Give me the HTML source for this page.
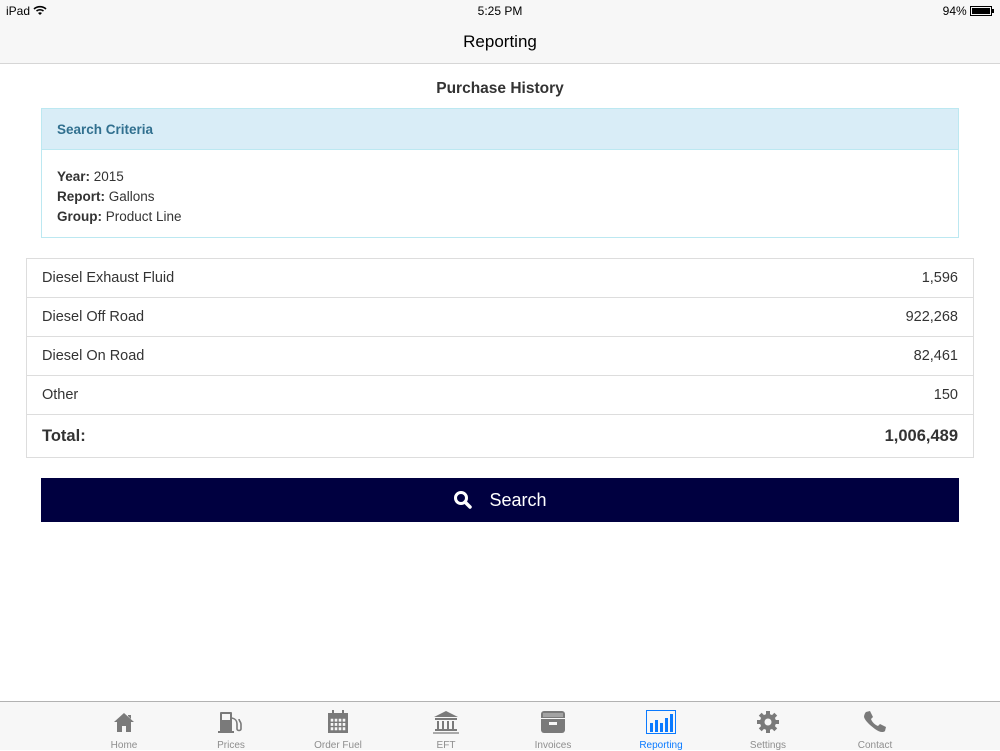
<!DOCTYPE html>
<html><head><style>
*{margin:0;padding:0;box-sizing:border-box}
body{width:1000px;height:750px;position:relative;background:#fff;font-family:"Liberation Sans",Helvetica,Arial,sans-serif;color:#333;overflow:hidden}
.abs{position:absolute}
#top{left:0;top:0;width:1000px;height:64px;background:#f7f7f7;border-bottom:1px solid #d6d6d6}
.sb{font-size:12px;color:#000;top:4px}
#title{top:32px;width:1000px;text-align:center;font-size:17px;color:#000}
#ph{top:80px;width:1000px;text-align:center;font-size:15.5px;font-weight:bold;color:#333}
#panel{left:41px;top:108px;width:918px;height:130px;border:1px solid #bce8f1}
#ph2{height:41px;background:#d9edf7;border-bottom:1px solid #bce8f1;color:#31708f;font-weight:bold;font-size:13.5px;padding:13px 0 0 15px}
#pb{padding:17px 15px;font-size:13.5px;line-height:20px}
#tbl{left:26px;top:258px;width:948px;border:1px solid #ddd}
.row{height:39px;border-bottom:1px solid #ddd;display:flex;justify-content:space-between;align-items:center;padding:0 15px;font-size:14.5px}
.row.t{height:42px;border-bottom:none;font-weight:bold;font-size:16.5px}
#btn{left:41px;top:478px;width:918px;height:44px;background:#000040;color:#fff;font-size:18px;display:flex;justify-content:center;align-items:center}
#tab{left:0;top:701px;width:1000px;height:49px;background:#f7f7f7;border-top:1px solid #b2b2b2}
.ti{position:absolute;top:0;width:100px;margin-left:-50px;text-align:center}
.ti svg{display:block;margin:8px auto 0}
.ti span{display:block;font-size:10px;color:#8e8e8e;margin-top:6px}
</style></head><body>
<div id="top" class="abs"></div>
<div class="abs sb" style="left:6px">iPad <svg width="14" height="10" viewBox="0 0 14 10"><path d="M1 4a9 9 0 0 1 12 0M3.5 6a5.5 5.5 0 0 1 7 0" stroke="#000" stroke-width="1.6" fill="none"/><path d="M7 10l-2-2a3 3 0 0 1 4 0z" fill="#000"/></svg></div>
<div class="abs sb" style="left:0;width:1000px;text-align:center">5:25 PM</div>
<div class="abs sb" style="right:6px;display:flex;align-items:center">94%&nbsp;<span style="display:inline-block;width:22px;height:10px;border:1px solid #000;padding:1px"><span style="display:block;width:100%;height:100%;background:#000"></span></span><span style="display:inline-block;width:2px;height:4px;background:#000"></span></div>
<div id="title" class="abs">Reporting</div>
<div id="ph" class="abs">Purchase History</div>
<div id="panel" class="abs"><div id="ph2">Search Criteria</div><div id="pb"><b>Year:</b> 2015<br><b>Report:</b> Gallons<br><b>Group:</b> Product Line</div></div>
<div id="tbl" class="abs">
<div class="row"><span>Diesel Exhaust Fluid</span><span>1,596</span></div>
<div class="row"><span>Diesel Off Road</span><span>922,268</span></div>
<div class="row"><span>Diesel On Road</span><span>82,461</span></div>
<div class="row"><span>Other</span><span>150</span></div>
<div class="row t"><span>Total:</span><span>1,006,489</span></div>
</div>
<div id="btn" class="abs"><svg width="20" height="20" viewBox="0 0 20 20" style="margin-right:16px"><circle cx="8" cy="8" r="5.5" stroke="#fff" stroke-width="3" fill="none"/><path d="M12 12l5 5" stroke="#fff" stroke-width="3.5" stroke-linecap="round"/></svg>Search</div>
<div id="tab" class="abs">
<div class="ti" style="left:124px"><svg width="24" height="24" viewBox="0 0 24 24"><path d="M2 12L12 3l10 9h-3v10h-5v-6h-4v6H5V12z M16 5h3v4l-3-3z" fill="#7a7a7a"/></svg><span>Home</span></div>
<div class="ti" style="left:231px"><svg width="28" height="24" viewBox="0 0 28 24"><rect x="3" y="2" width="12" height="20" rx="1" fill="#7a7a7a"/><rect x="5" y="4" width="8" height="6" fill="#f7f7f7"/><rect x="1" y="21" width="16" height="2" fill="#7a7a7a"/><path d="M15 8c4 1 5 3 5 6v5c0 2 4 2 4 0v-5c0-2-2-3-2-5" stroke="#7a7a7a" stroke-width="1.6" fill="none"/></svg><span>Prices</span></div>
<div class="ti" style="left:338px"><svg width="24" height="24" viewBox="0 0 24 24"><rect x="2" y="3" width="20" height="20" fill="#7a7a7a"/><path d="M4 8h16v13H4z" fill="#f7f7f7"/><path d="M4 8h16M4 12.3h16M4 16.6h16M4 21h16M4 8v13M8 8v13M12 8v13M16 8v13M20 8v13" stroke="#7a7a7a" stroke-width="1.4"/><rect x="6" y="0" width="2" height="4" fill="#7a7a7a"/><rect x="16" y="0" width="2" height="4" fill="#7a7a7a"/></svg><span>Order Fuel</span></div>
<div class="ti" style="left:446px"><svg width="26" height="24" viewBox="0 0 26 24"><path d="M13 1L1 7h24z" fill="#7a7a7a"/><rect x="2" y="8" width="22" height="2" fill="#7a7a7a"/><path d="M4 11h2v8H4zM9 11h2v8H9zM14 11h2v8h-2zM19 11h2v8h-2z" fill="#7a7a7a"/><rect x="2" y="19" width="22" height="2" fill="#7a7a7a"/><rect x="0" y="22" width="26" height="2" fill="#aaa"/></svg><span>EFT</span></div>
<div class="ti" style="left:553px"><svg width="26" height="24" viewBox="0 0 26 24"><rect x="1" y="1" width="24" height="22" rx="3" fill="#7a7a7a"/><path d="M3 4h20M3 6h20" stroke="#ccc" stroke-width="1"/><rect x="1" y="8" width="24" height="1" fill="#f7f7f7"/><rect x="9" y="12" width="8" height="3" fill="#f7f7f7"/></svg><span>Invoices</span></div>
<div class="ti" style="left:661px"><svg width="30" height="24" viewBox="0 0 30 24"><rect x="0.5" y="0.5" width="29" height="23" fill="none" stroke="#0a7aff"/><path d="M4 13h3v9H4zM9 10h3v12H9zM14 13h3v9h-3zM19 8h3v14h-3zM24 4h3v18h-3z" fill="#0a7aff"/></svg><span style="color:#0a7aff">Reporting</span></div>
<div class="ti" style="left:768px"><svg width="24" height="24" viewBox="0 0 24 24"><g fill="#7a7a7a"><circle cx="12" cy="12" r="8"/><rect x="10" y="1" width="4" height="22"/><rect x="1" y="10" width="22" height="4"/><rect x="10" y="1" width="4" height="22" transform="rotate(45 12 12)"/><rect x="10" y="1" width="4" height="22" transform="rotate(-45 12 12)"/></g><circle cx="12" cy="12" r="3.5" fill="#f7f7f7"/></svg><span>Settings</span></div>
<div class="ti" style="left:875px"><svg width="24" height="24" viewBox="0 0 24 24"><path d="M3 2l4-1 3 6-2 2c1 3 4 6 7 7l2-2 6 3-1 4c-2 2-6 1-10-2S2 11 1 7c0-2 1-4 2-5z" fill="#7a7a7a"/></svg><span>Contact</span></div>
</div>
</body></html>
